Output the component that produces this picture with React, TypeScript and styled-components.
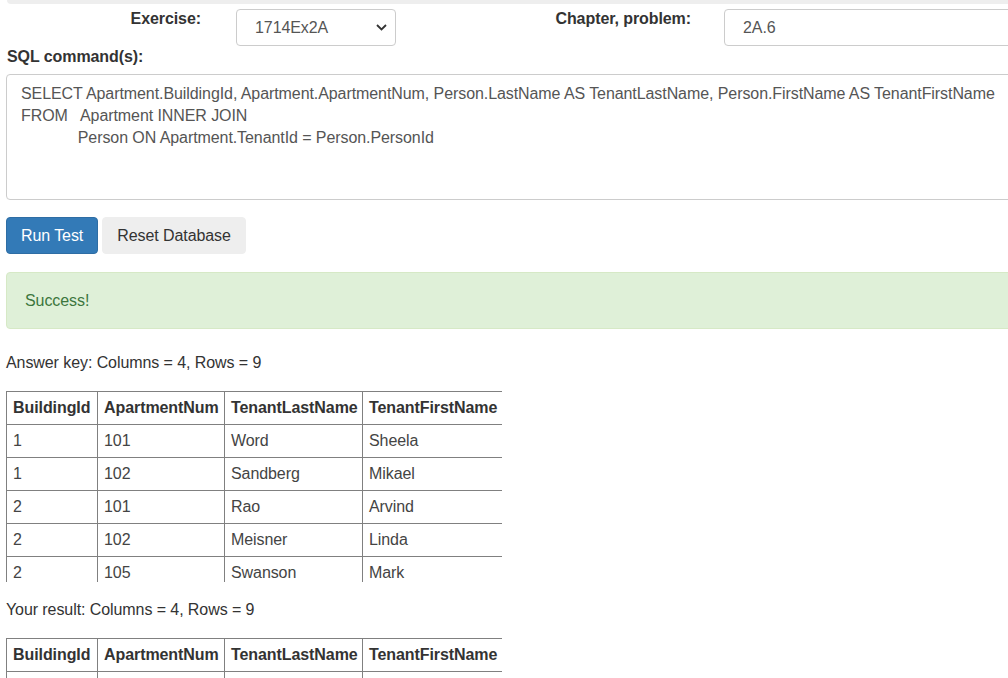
import React from "react";
import styled, { createGlobalStyle } from "styled-components";

const Global = createGlobalStyle`
  html, body { margin: 0; padding: 0; overflow: hidden; background: #fff; }
  body {
    font-family: "Liberation Sans", Arial, sans-serif;
    font-size: 16px;
    color: #333;
    line-height: 20px;
    letter-spacing: -0.08px;
  }
  * { box-sizing: border-box; }
`;

const Page = styled.div`
  width: 1200px;
  padding-left: 6px;
`;

const TopBar = styled.div`
  height: 4px;
  margin-left: 1px;
  background: #eee;
  border-bottom-left-radius: 4px;
`;

const FieldRow = styled.div`
  display: flex;
  align-items: flex-start;
  margin-top: 5px;
`;

const FieldLabel = styled.label<{ $w: number }>`
  width: ${(p) => p.$w}px;
  text-align: right;
  font-weight: bold;
  line-height: 20px;
  color: #333;
`;

const SelectBox = styled.div`
  margin-left: 35px;
  width: 160px;
  height: 37px;
  border: 1px solid #ccc;
  border-radius: 4px;
  display: flex;
  align-items: center;
  justify-content: space-between;
  padding: 0 8px 0 18px;
  color: #555;
`;

const TextInput = styled.div`
  margin-left: 33px;
  width: 420px;
  height: 37px;
  border: 1px solid #ccc;
  border-radius: 4px;
  display: flex;
  align-items: center;
  padding: 0 18px;
  color: #555;
`;

const SectionLabel = styled.div`
  font-weight: bold;
  margin-top: 1px;
  margin-left: 1px;
  margin-bottom: 7px;
  line-height: 20px;
`;

const SqlArea = styled.div`
  height: 126px;
  width: 1100px;
  border: 1px solid #ccc;
  border-radius: 4px;
  padding: 8px 14px;
  color: #555;
  line-height: 22px;
  white-space: pre;
`;

const ButtonRow = styled.div`
  display: flex;
  gap: 4px;
  margin-top: 17px;
`;

const Button = styled.button<{ $primary?: boolean }>`
  height: 37px;
  padding: 0 14px;
  border-radius: 4px;
  font-family: inherit;
  font-size: 16px;
  letter-spacing: inherit;
  border: 1px solid ${(p) => (p.$primary ? "#2e6da4" : "#eee")};
  background: ${(p) => (p.$primary ? "#337ab7" : "#eee")};
  color: ${(p) => (p.$primary ? "#fff" : "#333")};
`;

const Alert = styled.div`
  margin-top: 18px;
  width: 1100px;
  height: 57px;
  display: flex;
  align-items: center;
  padding: 0 18px;
  background: #dff0d8;
  border: 1px solid #d6e9c6;
  border-radius: 4px;
  color: #3c763d;
`;

const Caption = styled.div<{ $top: number }>`
  margin-top: ${(p) => p.$top}px;
  line-height: 20px;
  color: #333;
`;

const TableFrame = styled.div<{ $h?: number }>`
  margin-top: ${(p) => (p.$h ? 18 : 18)}px;
  width: 496px;
  height: ${(p) => (p.$h ? `${p.$h}px` : "auto")};
  overflow: hidden;
`;

const Table = styled.table`
  border-collapse: collapse;
  table-layout: fixed;
  width: 496px;
`;

const Th = styled.th`
  border: 1px solid #808080;
  height: 33px;
  padding: 0 6px;
  text-align: left;
  font-weight: bold;
  color: #333;
  white-space: nowrap;
`;

const Td = styled.td`
  border: 1px solid #808080;
  height: 33px;
  padding: 0 6px;
  color: #444;
  white-space: nowrap;
`;

const cols = [91, 127, 138, 140];
const headers = ["BuildingId", "ApartmentNum", "TenantLastName", "TenantFirstName"];
const rows = [
  ["1", "101", "Word", "Sheela"],
  ["1", "102", "Sandberg", "Mikael"],
  ["2", "101", "Rao", "Arvind"],
  ["2", "102", "Meisner", "Linda"],
  ["2", "105", "Swanson", "Mark"],
  ["3", "101", "Chen", "Lei"],
  ["3", "102", "Okafor", "Ngozi"],
  ["3", "103", "Garcia", "Maria"],
  ["3", "104", "Novak", "Petr"],
];

const Chevron = () => (
  <svg width="11" height="7" viewBox="0 0 11 7">
    <polyline points="1,1 5.5,5.5 10,1" fill="none" stroke="#333" strokeWidth="1.8" />
  </svg>
);

const ResultTable = ({ h }: { h?: number }) => (
  <TableFrame $h={h}>
    <Table>
      <colgroup>
        {cols.map((w, i) => (
          <col key={i} style={{ width: w }} />
        ))}
      </colgroup>
      <thead>
        <tr>
          {headers.map((x) => (
            <Th key={x}>{x}</Th>
          ))}
        </tr>
      </thead>
      <tbody>
        {rows.map((r, i) => (
          <tr key={i}>
            {r.map((c, j) => (
              <Td key={j}>{c}</Td>
            ))}
          </tr>
        ))}
      </tbody>
    </Table>
  </TableFrame>
);

const sql =
  "SELECT Apartment.BuildingId, Apartment.ApartmentNum, Person.LastName AS TenantLastName, Person.FirstName AS TenantFirstName\n" +
  "FROM   Apartment INNER JOIN\n" +
  "             Person ON Apartment.TenantId = Person.PersonId";

export default function App() {
  return (
    <>
      <Global />
      <Page>
        <TopBar />
        <FieldRow>
          <FieldLabel $w={195}>Exercise:</FieldLabel>
          <SelectBox>
            <span>1714Ex2A</span>
            <Chevron />
          </SelectBox>
          <FieldLabel $w={295}>Chapter, problem:</FieldLabel>
          <TextInput>2A.6</TextInput>
        </FieldRow>
        <SectionLabel>SQL command(s):</SectionLabel>
        <SqlArea>{sql}</SqlArea>
        <ButtonRow>
          <Button $primary>Run Test</Button>
          <Button>Reset Database</Button>
        </ButtonRow>
        <Alert>Success!</Alert>
        <Caption $top={24}>Answer key: Columns = 4, Rows = 9</Caption>
        <ResultTable h={191} />
        <Caption $top={18}>Your result: Columns = 4, Rows = 9</Caption>
        <ResultTable />
      </Page>
    </>
  );
}
